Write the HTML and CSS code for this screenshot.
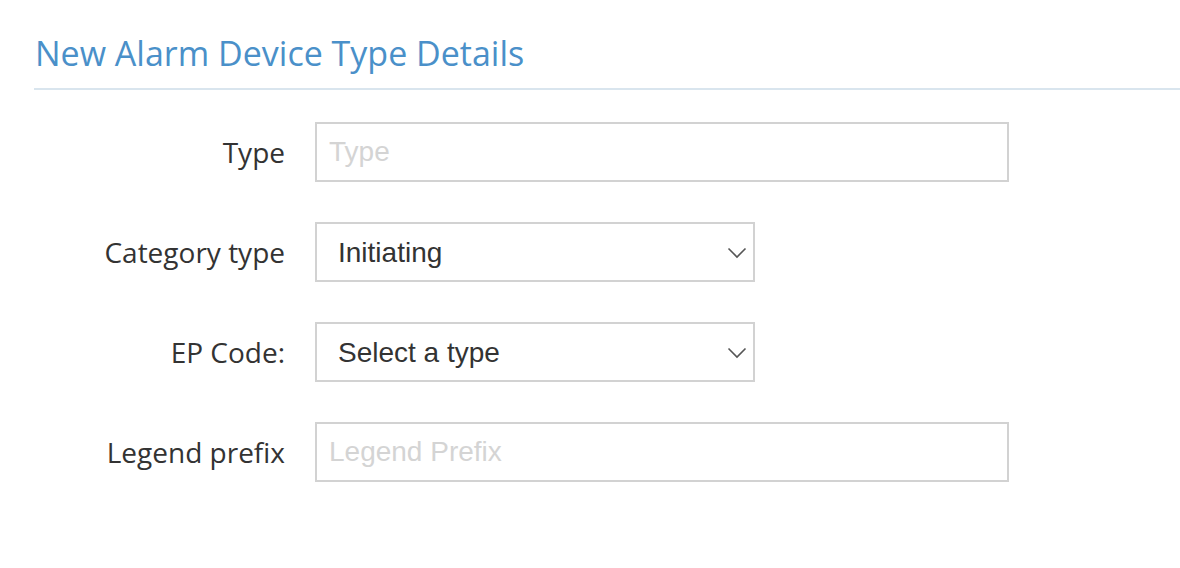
FILE: index.html
```html
<!DOCTYPE html>
<html lang="en">
<head>
  <meta charset="UTF-8">
  <title>New Alarm Device Type Details</title>
  <link rel="stylesheet" href="styles.css">
</head>
<body>
  <div class="page">
    <h2 class="title">New Alarm Device Type Details</h2>

    <form class="form">
      <div class="row">
        <label for="type">Type</label>
        <input type="text" id="type" class="field wide" placeholder="Type">
      </div>

      <div class="row">
        <label for="category">Category type</label>
        <div class="select-wrap">
          <select id="category" class="field">
            <option>Initiating</option>
          </select>
          <svg class="chevron" width="20" height="12" viewBox="0 0 20 12"><path d="M1.5 1.5 L10 10 L18.5 1.5" fill="none" stroke="#555" stroke-width="1.6"/></svg>
        </div>
      </div>

      <div class="row">
        <label for="epcode">EP Code:</label>
        <div class="select-wrap">
          <select id="epcode" class="field">
            <option>Select a type</option>
          </select>
          <svg class="chevron" width="20" height="12" viewBox="0 0 20 12"><path d="M1.5 1.5 L10 10 L18.5 1.5" fill="none" stroke="#555" stroke-width="1.6"/></svg>
        </div>
      </div>

      <div class="row">
        <label for="legend">Legend prefix</label>
        <input type="text" id="legend" class="field wide" placeholder="Legend Prefix">
      </div>
    </form>
  </div>
</body>
</html>
```

FILE: styles.css
```css
body {
  margin: 0;
  background: #fff;
  font-family: "Open Sans", sans-serif;
  color: #333;
}
.page {
  padding: 0 0 0 34px;
}
.title {
  margin: 0;
  padding: 30px 0 12px 1px;
  font-size: 34px;
  font-weight: 400;
  color: #4a90c9;
  border-bottom: 2px solid #d9e5ee;
}
.form {
  padding-top: 32px;
}
.row {
  display: flex;
  align-items: center;
  margin-bottom: 40px;
}
.row label {
  width: 251px;
  padding-right: 30px;
  text-align: right;
  font-size: 28px;
}
.field {
  box-sizing: border-box;
  height: 60px;
  border: 2px solid #d2d2d2;
  border-radius: 0;
  background: #fff;
  font-family: "Liberation Sans", Arial, sans-serif;
  font-size: 28px;
  color: #333;
  padding: 0 12px;
  outline: none;
}
.field::placeholder {
  color: #d4d4d4;
}
.wide {
  width: 694px;
}
.select-wrap {
  position: relative;
}
.select-wrap select {
  width: 440px;
  appearance: none;
  padding-left: 21px;
}
.chevron {
  position: absolute;
  right: 8px;
  top: 25px;
  pointer-events: none;
}
```
